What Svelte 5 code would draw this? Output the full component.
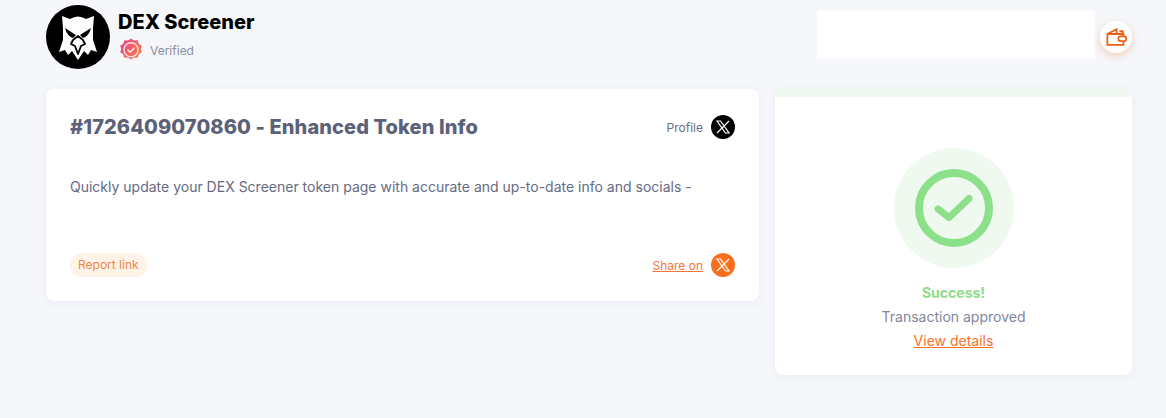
<script>
  const xPath = "M6 6h3.500l8.500 12h-3.500z M18 6 6 18";
</script>

<div class="page">
  <header class="top">
    <div class="brand">
      <svg class="logo" viewBox="0 0 64 64" aria-hidden="true">
        <circle cx="32" cy="32" r="32" fill="#000" />
        <path fill="#fff" d="M16 11 L24 14 Q32 9 40 14 L48 11 L47 23 L47 35 L51 47 L45 45 L42 50 L38 46 L32 55 L26 46 L22 50 L19 45 L13 47 L17 35 L17 23 Z" />
        <path fill="#000" d="M19 23 L30 30 L27 33 Q21 31 19 23 Z M45 23 L34 30 L37 33 Q43 31 45 23 Z" />
        <path fill="none" stroke="#000" stroke-width="1.800" stroke-linejoin="round" d="M27 35 L32 31 L37 35 L39 39 L35 41 L32 49 L29 41 L25 39 Z" />
      </svg>
      <div class="brand-text">
        <div class="brand-name">DEX Screener</div>
        <div class="verified">
          <svg class="badge" viewBox="0 0 24 24" aria-hidden="true">
            <defs>
              <linearGradient id="bg" x1="0" y1="0.2" x2="1" y2="0.8">
                <stop offset="0" stop-color="#e6468f" />
                <stop offset="1" stop-color="#fb7d3c" />
              </linearGradient>
            </defs>
            <path fill="url(#bg)" d="M12 .5l3 2 3.600-.2 1.200 3.400 3 2-1 3.300 1 3.300-3 2-1.200 3.400-3.600-.2-3 2-3-2-3.600.2-1.200-3.400-3-2 1-3.300-1-3.300 3-2L5.400 2.300 9 2.500z" />
            <circle cx="12" cy="11.800" r="7" fill="none" stroke="#fff" stroke-opacity=".8" stroke-width="1.400" />
            <path d="M8.800 12l2.200 2.200 4-4" fill="none" stroke="#fff" stroke-opacity=".9" stroke-width="1.400" stroke-linecap="round" stroke-linejoin="round" />
          </svg>
          <span>Verified</span>
        </div>
      </div>
    </div>
    <div class="top-right">
      <div class="blank"></div>
      <button class="wallet" aria-label="Wallet">
        <svg viewBox="0 0 20 20" width="24" height="24" aria-hidden="true">
          <path fill="none" stroke="#ea5f14" stroke-width="1.500" d="M2.800 7.500h13.400v2.300 M16.200 13.500v3H2.800v-9L10.500 3.500v4 M12.800 5.200h2.800v2.300" />
          <rect x="12" y="9.500" width="6.500" height="4" rx="1.600" fill="#fff" stroke="#ea5f14" stroke-width="1.400" />
        </svg>
      </button>
    </div>
  </header>

  <main class="cols">
    <section class="card info">
      <div class="row title-row">
        <h1>#1726409070860 - Enhanced Token Info</h1>
        <div class="side">
          <span class="profile">Profile</span>
          <svg class="x" viewBox="0 0 24 24" aria-hidden="true">
            <circle cx="12" cy="12" r="12" fill="#000" />
            <path d={xPath} fill="none" stroke="#fff" stroke-width="1.200" />
          </svg>
        </div>
      </div>
      <p class="desc">Quickly update your DEX Screener token page with accurate and up-to-date info and socials -</p>
      <div class="row foot">
        <span class="report">Report link</span>
        <div class="side">
          <span class="share">Share on</span>
          <svg class="x" viewBox="0 0 24 24" aria-hidden="true">
            <circle cx="12" cy="12" r="12" fill="#f96f1e" />
            <path d={xPath} fill="none" stroke="#fff" stroke-width="1.200" />
          </svg>
        </div>
      </div>
    </section>

    <aside class="card status">
      <div class="halo">
        <svg viewBox="0 0 80 80" width="80" height="80" aria-hidden="true">
          <circle cx="40" cy="40" r="35" fill="none" stroke="#8ce08a" stroke-width="8" />
          <path d="M24 41 L35 49.500 L55 30.500" fill="none" stroke="#8ce08a" stroke-width="7" stroke-linecap="round" stroke-linejoin="round" />
        </svg>
      </div>
      <div class="ok">Success!</div>
      <div class="approved">Transaction approved</div>
      <div class="details">View details</div>
    </aside>
  </main>
</div>

<style>
  :global(body) {
    margin: 0;
    background: #f5f7fb;
    font-family: Inter, "Liberation Sans", sans-serif;
  }
  .page {
    width: 1166px;
    height: 418px;
    padding: 5px 34px 0 46px;
    box-sizing: border-box;
    overflow: hidden;
  }
  .top {
    display: flex;
    justify-content: space-between;
    height: 84px;
  }
  .brand {
    display: flex;
    gap: 8px;
    align-items: flex-start;
  }
  .logo {
    width: 64px;
    height: 64px;
  }
  .brand-name {
    font-weight: 800;
    font-size: 20px;
    line-height: 24px;
    margin-top: 5px;
    color: #000;
  }
  .verified {
    display: flex;
    align-items: center;
    gap: 7px;
    margin-top: 4px;
    margin-left: 1px;
    font-size: 12px;
    color: #8a90a2;
  }
  .badge {
    width: 24px;
    height: 24px;
  }
  .top-right {
    display: flex;
    align-items: flex-start;
    gap: 5px;
    padding-top: 6px;
  }
  .blank {
    width: 278px;
    height: 48px;
    background: #fff;
  }
  .wallet {
    width: 32px;
    height: 32px;
    margin-top: 10px;
    padding: 0;
    border: 0;
    border-radius: 50%;
    background: #fff;
    box-shadow: 0 3px 8px rgba(249, 111, 30, 0.3);
    display: flex;
    align-items: center;
    justify-content: center;
  }
  .cols {
    display: flex;
    gap: 16px;
    align-items: flex-start;
  }
  .card {
    background: #fff;
    border-radius: 8px;
    box-shadow: 0 2px 10px rgba(60, 70, 110, 0.06);
    box-sizing: border-box;
  }
  .info {
    width: 713px;
    height: 212px;
    padding: 24px 24px 24px;
    display: flex;
    flex-direction: column;
  }
  .row {
    display: flex;
    justify-content: space-between;
    align-items: center;
  }
  h1 {
    margin: 0;
    font-weight: 800;
    font-size: 20px;
    letter-spacing: 0.1px;
    line-height: 28px;
    color: #5b6178;
  }
  .side {
    display: flex;
    align-items: center;
    gap: 8px;
  }
  .x {
    width: 24px;
    height: 24px;
  }
  .profile {
    font-size: 12px;
    color: #6b7082;
  }
  .desc {
    margin: 36px 0 0;
    font-size: 14px;
    line-height: 20px;
    color: #656b82;
  }
  .foot {
    margin-top: auto;
  }
  .report {
    font-size: 12px;
    line-height: 24px;
    padding: 0 8px;
    border-radius: 12px;
    background: #fff3e8;
    color: #f0844a;
  }
  .share {
    font-size: 12px;
    color: #f0783a;
    text-decoration: underline;
  }
  .status {
    width: 357px;
    height: 286px;
    border-top: 8px solid #f0f9ef;
    padding-top: 51px;
    display: flex;
    flex-direction: column;
    align-items: center;
  }
  .halo {
    width: 120px;
    height: 120px;
    border-radius: 50%;
    background: #eff9ef;
    display: flex;
    align-items: center;
    justify-content: center;
  }
  .ok {
    margin-top: 13px;
    font-size: 14px;
    font-weight: 700;
    line-height: 24px;
    color: #8fdd8c;
  }
  .approved {
    font-size: 14px;
    line-height: 24px;
    color: #7f869c;
  }
  .details {
    font-size: 14px;
    line-height: 24px;
    color: #f9702a;
    text-decoration: underline;
  }
</style>
